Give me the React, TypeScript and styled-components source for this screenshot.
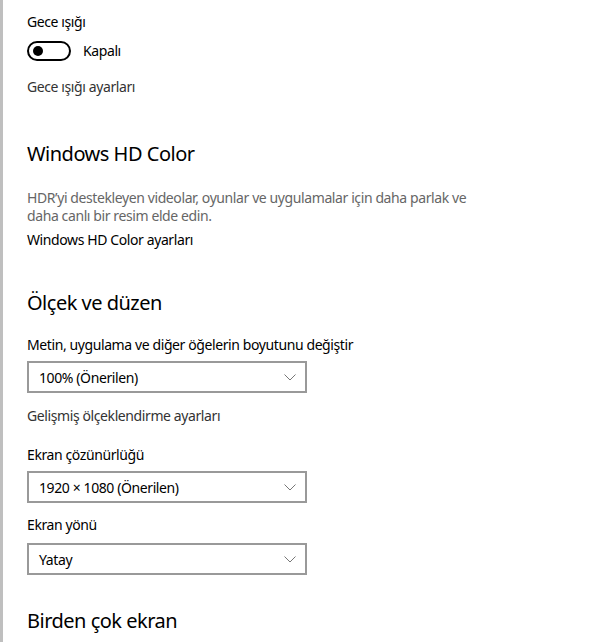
import React from "react";
import styled, { createGlobalStyle } from "styled-components";

const Global = createGlobalStyle`
  html, body { margin: 0; padding: 0; background: #ffffff; }
  body { font-family: "Noto Sans", "Open Sans", sans-serif; color: #000; }
`;

const Page = styled.div`
  display: flex;
  width: 600px;
  height: 642px;
  overflow: hidden;
  background: #fff;
`;

const Strip = styled.div`
  width: 3px;
  flex: 0 0 3px;
  background: #bfbfbf;
`;

const Content = styled.div`
  flex: 1;
  padding: 12px 0 0 24px;
  display: flex;
  flex-direction: column;
`;

const Text = styled.div<{ $tone?: "dark" | "gray" | "mid"; $mt?: number }>`
  font-size: 14px;
  line-height: 20px;
  letter-spacing: -0.4px;
  margin-top: ${(p) => p.$mt ?? 0}px;
  color: ${(p) => (p.$tone === "gray" ? "#666666" : p.$tone === "mid" ? "#333333" : "#000000")};
  white-space: nowrap;
`;

const Desc = styled.div<{ $mt?: number }>`
  font-size: 14px;
  line-height: 18px;
  letter-spacing: -0.4px;
  color: #666666;
  width: 450px;
  margin-top: ${(p) => p.$mt ?? 0}px;
`;

const Heading = styled.div<{ $mt?: number }>`
  font-size: 20px;
  line-height: 28px;
  letter-spacing: -0.5px;
  margin-top: ${(p) => p.$mt ?? 0}px;
  color: #000;
  white-space: nowrap;
`;

const ToggleRow = styled.div<{ $mt?: number }>`
  display: flex;
  align-items: center;
  gap: 12px;
  margin-top: ${(p) => p.$mt ?? 0}px;
  height: 20px;
`;

const Toggle = styled.div`
  box-sizing: border-box;
  width: 44px;
  height: 20px;
  border: 2px solid #000;
  border-radius: 10px;
  display: flex;
  align-items: center;
  padding-left: 4px;
`;

const Knob = styled.div`
  width: 10px;
  height: 10px;
  border-radius: 50%;
  background: #000;
`;

const Select = styled.div<{ $mt?: number }>`
  box-sizing: border-box;
  width: 280px;
  height: 32px;
  border: 2px solid #999999;
  display: flex;
  align-items: center;
  justify-content: space-between;
  padding: 0 9px 0 10px;
  font-size: 14px;
  letter-spacing: -0.4px;
  color: #000;
  margin-top: ${(p) => p.$mt ?? 0}px;
`;

const Chevron = () => (
  <svg width="12" height="7" viewBox="0 0 12 7">
    <path d="M0.5 0.5 L6 6 L11.5 0.5" fill="none" stroke="#777" strokeWidth="1" />
  </svg>
);

export default function App() {
  return (
    <Page>
      <Global />
      <Strip />
      <Content>
        <Text>Gece ışığı</Text>
        <ToggleRow $mt={9}>
          <Toggle>
            <Knob />
          </Toggle>
          <Text>Kapalı</Text>
        </ToggleRow>
        <Text $tone="mid" $mt={16}>Gece ışığı ayarları</Text>

        <Heading $mt={43}>Windows HD Color</Heading>
        <Desc $mt={21}>
          HDR’yi destekleyen videolar, oyunlar ve uygulamalar için daha parlak ve daha canlı bir resim elde edin.
        </Desc>
        <Text $mt={5}>Windows HD Color ayarları</Text>

        <Heading $mt={39}>Ölçek ve düzen</Heading>
        <Text $mt={18}>Metin, uygulama ve diğer öğelerin boyutunu değiştir</Text>
        <Select $mt={6}>
          <span>100% (Önerilen)</span>
          <Chevron />
        </Select>
        <Text $tone="mid" $mt={13}>Gelişmiş ölçeklendirme ayarları</Text>

        <Text $mt={19}>Ekran çözünürlüğü</Text>
        <Select $mt={6}>
          <span>1920 × 1080 (Önerilen)</span>
          <Chevron />
        </Select>
        <Text $mt={12}>Ekran yönü</Text>
        <Select $mt={8}>
          <span>Yatay</span>
          <Chevron />
        </Select>

        <Heading $mt={32}>Birden çok ekran</Heading>
      </Content>
    </Page>
  );
}
